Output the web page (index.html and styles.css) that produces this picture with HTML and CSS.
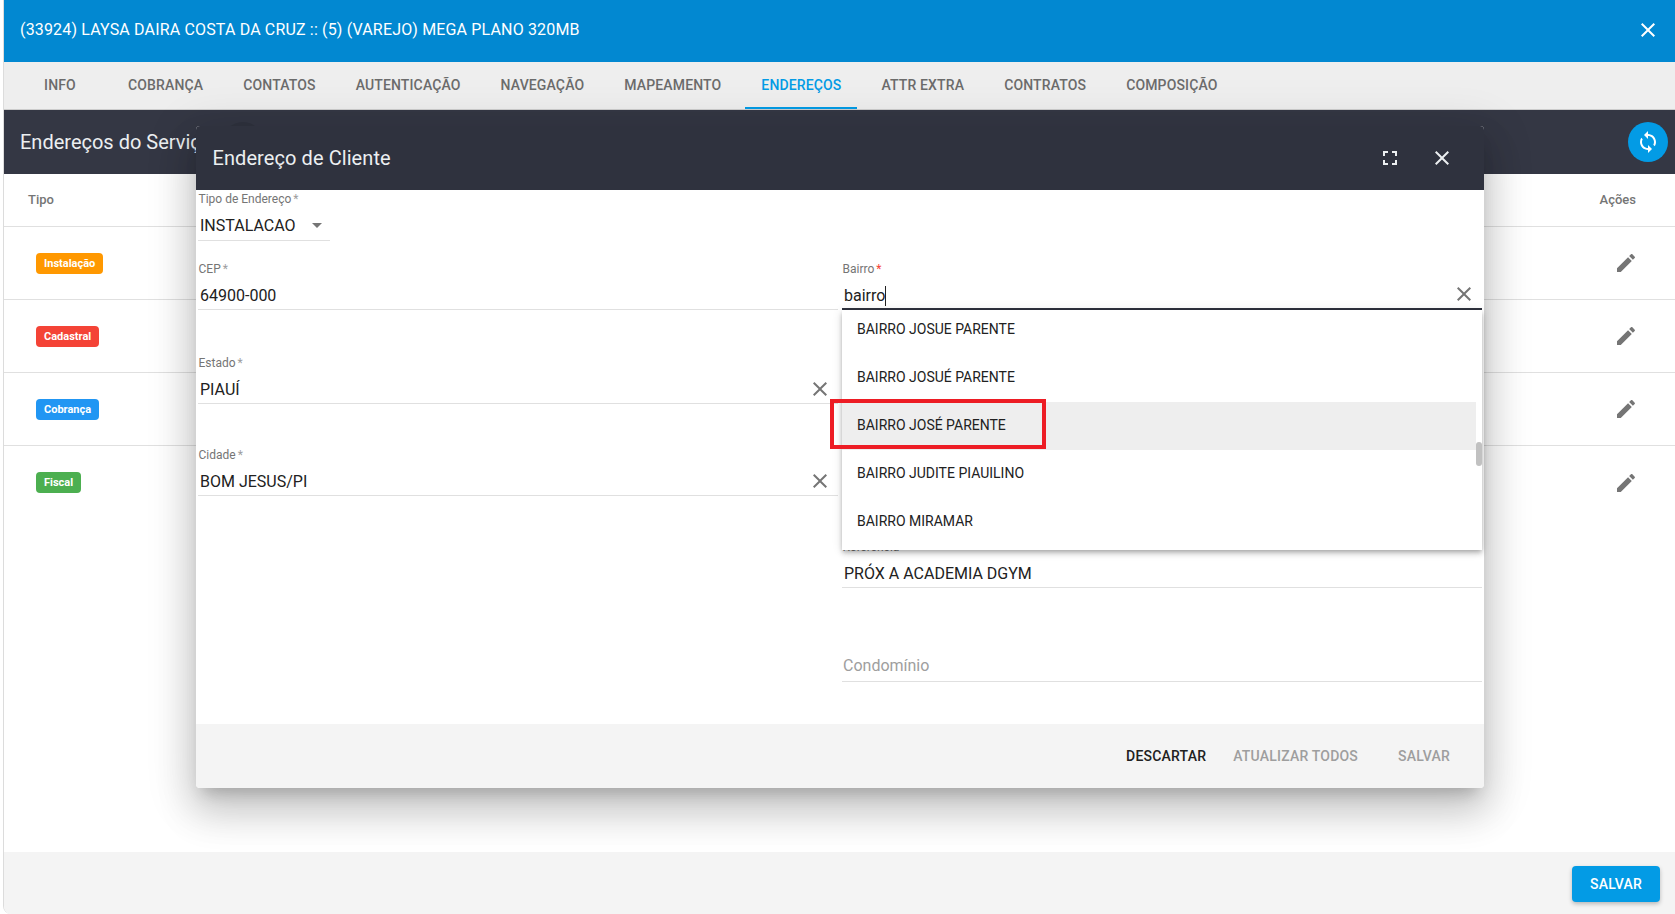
FILE: index.html
```html
<!DOCTYPE html>
<html lang="pt-BR">
<head>
<meta charset="utf-8">
<title>Endereços</title>
<link rel="stylesheet" href="styles.css">
</head>
<body>
<svg class="sprites" width="0" height="0" aria-hidden="true">
  <symbol id="i-close" viewBox="0 0 24 24"><path d="M19 6.41L17.59 5 12 10.59 6.41 5 5 6.41 10.59 12 5 17.59 6.41 19 12 13.41 17.59 19 19 17.59 13.41 12z"/></symbol>
  <symbol id="i-edit" viewBox="0 0 24 24"><path d="M3 17.25V21h3.75L17.81 9.94l-3.75-3.75L3 17.25zM20.71 7.04c.39-.39.39-1.02 0-1.41l-2.34-2.34c-.39-.39-1.02-.39-1.41 0l-1.83 1.83 3.75 3.75 1.83-1.83z"/></symbol>
  <symbol id="i-sync" viewBox="0 0 24 24"><path d="M12 4V1L8 5l4 4V6c3.31 0 6 2.69 6 6 0 1.01-.25 1.97-.7 2.8l1.46 1.46C19.54 15.03 20 13.57 20 12c0-4.42-3.58-8-8-8zm0 14c-3.31 0-6-2.69-6-6 0-1.01.25-1.97.7-2.8L5.24 7.74C4.46 8.97 4 10.43 4 12c0 4.42 3.58 8 8 8v3l4-4-4-4v3z"/></symbol>
  <symbol id="i-full" viewBox="0 0 24 24"><path d="M7 14H5v5h5v-2H7v-3zm-2-4h2V7h3V5H5v5zm12 7h-3v2h5v-5h-2v3zM14 5v2h3v3h2V5h-5z"/></symbol>
</svg>

<div class="page">
  <header class="topbar">
    <span class="topbar-title">(33924) LAYSA DAIRA COSTA DA CRUZ :: (5) (VAREJO) MEGA PLANO 320MB</span>
    <svg class="icon icon-white"><use href="#i-close"/></svg>
  </header>

  <nav class="tabs">
    <a class="tab">INFO</a>
    <a class="tab">COBRANÇA</a>
    <a class="tab">CONTATOS</a>
    <a class="tab">AUTENTICAÇÃO</a>
    <a class="tab">NAVEGAÇÃO</a>
    <a class="tab">MAPEAMENTO</a>
    <a class="tab tab-active">ENDEREÇOS</a>
    <a class="tab">ATTR EXTRA</a>
    <a class="tab">CONTRATOS</a>
    <a class="tab">COMPOSIÇÃO</a>
  </nav>

  <div class="toolbar">
    <h2 class="toolbar-title">Endereços do Serviço</h2>
    <span class="hidden-btn"></span>
    <button class="sync-btn"><svg class="icon icon-white"><use href="#i-sync"/></svg></button>
  </div>

  <main class="table">
    <div class="table-head"><span>Tipo</span><span class="head-actions">Ações</span></div>
    <div class="table-row"><span class="badge badge-orange">Instalação</span><svg class="icon icon-grey row-edit"><use href="#i-edit"/></svg></div>
    <div class="table-row"><span class="badge badge-red">Cadastral</span><svg class="icon icon-grey row-edit"><use href="#i-edit"/></svg></div>
    <div class="table-row"><span class="badge badge-blue">Cobrança</span><svg class="icon icon-grey row-edit"><use href="#i-edit"/></svg></div>
    <div class="table-row table-row-last"><span class="badge badge-green">Fiscal</span><svg class="icon icon-grey row-edit"><use href="#i-edit"/></svg></div>
  </main>

  <footer class="page-footer"><button class="save-btn">SALVAR</button></footer>
</div>

<section class="modal">
  <div class="modal-head">
    <h3 class="modal-title">Endereço de Cliente</h3>
    <svg class="icon icon-light"><use href="#i-full"/></svg>
    <svg class="icon icon-light modal-close"><use href="#i-close"/></svg>
  </div>

  <div class="modal-body">
    <div class="field field-select">
      <label class="field-label">Tipo de Endereço<span class="req">*</span></label>
      <div class="field-input">INSTALACAO<span class="caret"></span></div>
    </div>

    <div class="cols">
      <div class="col">
        <div class="field mt-cep">
          <label class="field-label">CEP<span class="req">*</span></label>
          <div class="field-input">64900-000</div>
        </div>
        <div class="field mt-estado">
          <label class="field-label">Estado<span class="req">*</span></label>
          <div class="field-input">PIAUÍ<svg class="icon-clear"><use href="#i-close"/></svg></div>
        </div>
        <div class="field mt-cidade">
          <label class="field-label">Cidade<span class="req">*</span></label>
          <div class="field-input">BOM JESUS/PI<svg class="icon-clear"><use href="#i-close"/></svg></div>
        </div>
      </div>

      <div class="col">
        <div class="field field-open mt-cep">
          <label class="field-label">Bairro<span class="req req-on">*</span></label>
          <div class="field-input field-input-focus"><span class="typed">bairro</span><svg class="icon-clear"><use href="#i-close"/></svg></div>
          <div class="dropdown">
            <ul class="options">
              <li class="option">BAIRRO JOSUE PARENTE</li>
              <li class="option">BAIRRO JOSUÉ PARENTE</li>
              <li class="option option-hover">BAIRRO JOSÉ PARENTE</li>
              <li class="option">BAIRRO JUDITE PIAUILINO</li>
              <li class="option">BAIRRO MIRAMAR</li>
            </ul>
            <span class="scroll-thumb"></span>
            <span class="red-box"></span>
          </div>
        </div>
        <div class="field mt-ref">
          <label class="field-label">Referência</label>
          <div class="field-input">PRÓX A ACADEMIA DGYM</div>
        </div>
        <div class="field mt-condo">
          <label class="field-label"></label>
          <div class="field-input field-placeholder">Condomínio</div>
        </div>
      </div>
    </div>
  </div>

  <div class="modal-foot">
    <button class="text-btn text-btn-on">DESCARTAR</button>
    <button class="text-btn">ATUALIZAR TODOS</button>
    <button class="text-btn text-btn-min">SALVAR</button>
  </div>
</section>
</body>
</html>
```

FILE: styles.css
```css
* { box-sizing: border-box; }

html, body {
  margin: 0;
  height: 914px;
  overflow: hidden;
  background: #fff;
  font-family: Roboto, "Liberation Sans", sans-serif;
  color: #212121;
}

.sprites { position: absolute; }

.icon { width: 24px; height: 24px; display: block; flex: none; }
.icon-white { fill: #fff; }
.icon-light { fill: #eceff1; }
.icon-grey { fill: #757575; }
.icon-clear { width: 24px; height: 24px; fill: #757575; flex: none; margin-top: -3px; }

.page {
  margin-left: 3px;
  height: 914px;
  border-left: 1px solid #dcdcdc;
  border-bottom-left-radius: 8px;
  overflow: hidden;
  display: flex;
  flex-direction: column;
}

.topbar {
  height: 62px;
  flex: none;
  background: #0288d1;
  color: #fff;
  display: flex;
  align-items: center;
  justify-content: space-between;
  padding: 0 15px 2px 16px;
}
.topbar-title { font-size: 16px; letter-spacing: .16px; margin-top: -2px; }

.tabs {
  height: 48px;
  flex: none;
  background: #eee;
  border-bottom: 1px solid #ccc;
  display: flex;
  gap: 8px;
  padding-left: 12px;
}
.tab {
  min-width: 88px;
  padding: 0 16px;
  height: 47px;
  display: flex;
  align-items: center;
  justify-content: center;
  font-size: 14px;
  font-weight: 500;
  letter-spacing: .14px;
  color: #6b6b6b;
  border-bottom: 2px solid transparent;
}
.tab-active { color: #039be5; border-bottom-color: #039be5; }

.toolbar {
  height: 64px;
  flex: none;
  background: #343744;
  display: flex;
  align-items: center;
  padding: 0 7px 0 16px;
}
.toolbar-title { margin: 0; font-size: 20px; font-weight: 400; color: #eceff1; white-space: nowrap; }
.hidden-btn { width: 40px; height: 40px; border-radius: 50%; background: #2f323e; margin-left: 11px; }
.sync-btn {
  width: 40px;
  height: 40px;
  margin-left: auto;
  border: 0;
  border-radius: 50%;
  background: #039be5;
  padding: 8px;
}

.table { flex: 1; background: #fff; }
.table-head {
  height: 53px;
  display: flex;
  align-items: center;
  justify-content: space-between;
  padding: 0 39px 2px 24px;
  border-bottom: 1px solid #e0e0e0;
  font-size: 13px;
  font-weight: 500;
  color: #757575;
}
.table-row {
  height: 73px;
  display: flex;
  align-items: center;
  justify-content: space-between;
  padding: 0 37px 0 32px;
  border-bottom: 1px solid #e0e0e0;
}
.table-row-last { border-bottom: 0; }
.badge {
  height: 21px;
  display: flex;
  align-items: center;
  padding: 0 8px;
  border-radius: 4px;
  color: #fff;
  font-size: 11px;
  font-weight: 700;
}
.badge-orange { background: #ff9800; }
.badge-red { background: #f44336; }
.badge-blue { background: #2196f3; }
.badge-green { background: #4caf50; }

.page-footer {
  height: 62px;
  flex: none;
  background: #f4f4f4;
  display: flex;
  align-items: flex-start;
  justify-content: flex-end;
  padding: 14px 15px 0 0;
}
.save-btn {
  width: 88px;
  height: 36px;
  border: 0;
  border-radius: 4px;
  background: #039be5;
  color: #fff;
  font: 500 14px Roboto, sans-serif;
  letter-spacing: .2px;
  box-shadow: 0 2px 4px rgba(0, 0, 0, .25);
}

.modal {
  position: absolute;
  left: 196px;
  top: 126px;
  width: 1288px;
  height: 662px;
  background: #fff;
  border-radius: 4px;
  display: flex;
  flex-direction: column;
  box-shadow: 0 11px 15px -7px rgba(0, 0, 0, .2), 0 24px 38px 3px rgba(0, 0, 0, .14), 0 9px 46px 8px rgba(0, 0, 0, .12);
}
.modal-head {
  height: 64px;
  flex: none;
  background: #2f323e;
  border-radius: 4px 4px 0 0;
  display: flex;
  align-items: center;
  padding: 0 30px 0 16.5px;
}
.modal-title { margin: 0 auto 0 0; font-size: 20px; font-weight: 400; letter-spacing: .08px; color: #eceff1; }
.modal-close { margin-left: 28px; }

.modal-body { flex: 1; padding: 1px 2px 0; }
.cols { display: flex; gap: 4px; }
.col { width: 640px; }

.field { position: relative; }
.field-select { width: 132px; }
.field-label { display: block; height: 16px; padding-left: .5px; font-size: 12px; line-height: 16px; color: #757575; white-space: nowrap; }
.req { color: #9e9e9e; margin-left: 2px; }
.req-on { color: #f44336; }
.field-input {
  height: 33px;
  padding: 6px 6px 0 2px;
  border-bottom: 1px solid #e0e0e0;
  font-size: 16px;
  line-height: 26px;
  display: flex;
  justify-content: space-between;
  align-items: center;
  color: #212121;
}
.field-select .field-input { height: 34px; padding: 5px 8px 0 2px; }
.field-placeholder { color: #9e9e9e; padding: 2px 6px 0 1px; line-height: 28px; }
.field-input-focus { border-bottom: 2px solid #2f323e; }
.typed { border-right: 1px solid #212121; line-height: 20px; }
.caret {
  width: 0;
  height: 0;
  margin-top: -2px;
  border-left: 5px solid transparent;
  border-right: 5px solid transparent;
  border-top: 5px solid #757575;
}

.mt-cep { margin-top: 20px; }
.mt-estado { margin-top: 45px; }
.mt-cidade { margin-top: 43px; }
.mt-ref { margin-top: 229px; }
.mt-condo { margin-top: 45px; }

.dropdown {
  position: absolute;
  left: 0;
  top: 49px;
  width: 640px;
  height: 240px;
  background: #fff;
  z-index: 2;
  box-shadow: 0 2px 4px -1px rgba(0, 0, 0, .2), 0 4px 5px rgba(0, 0, 0, .14), 0 1px 10px rgba(0, 0, 0, .12);
}
.options { list-style: none; margin: -4px 6px 0 0; padding: 0; }
.option {
  height: 48px;
  padding: 0 0 2px 15px;
  display: flex;
  align-items: center;
  font-size: 14px;
  color: #212121;
}
.option-hover { background: #eee; }
.scroll-thumb {
  position: absolute;
  right: 0;
  top: 132px;
  width: 6px;
  height: 24px;
  border-radius: 3px;
  background: #c1c1c1;
}
.red-box {
  position: absolute;
  left: -12px;
  top: 89px;
  width: 216px;
  height: 50px;
  border: 4px solid #ed1c24;
}

.modal-foot {
  height: 64px;
  flex: none;
  background: #f4f4f4;
  border-radius: 0 0 4px 4px;
  display: flex;
  align-items: center;
  justify-content: flex-end;
  padding-right: 16px;
}
.text-btn {
  height: 36px;
  padding: 0 12px;
  margin-left: 3px;
  border: 0;
  background: transparent;
  color: #9e9e9e;
  font: 500 14px Roboto, sans-serif;
  letter-spacing: .2px;
}
.text-btn-on { color: #212121; }
.text-btn-min { width: 88px; margin-left: 10px; }
```
